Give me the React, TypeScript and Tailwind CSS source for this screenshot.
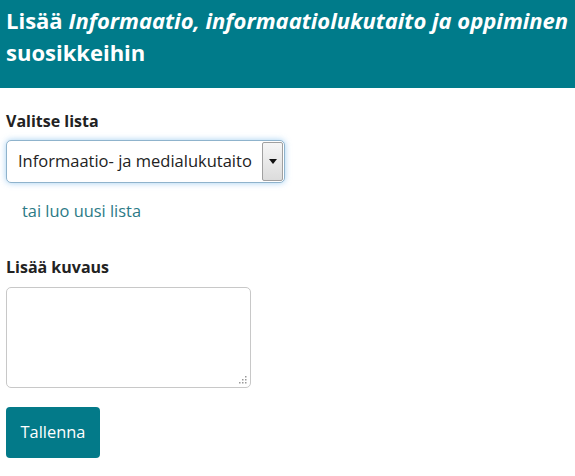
export default function App() {
  const font = { fontFamily: '"Open Sans", "Noto Sans", sans-serif' };
  return (
    <div className="min-h-screen bg-white text-[#222]" style={font}>
      <header className="h-[88px] overflow-hidden bg-[#007b8a] px-[6px] pt-[4px]">
        <h1 className="text-[22px] font-bold leading-[32px] text-white">
          <span className="whitespace-nowrap">
            Lisää <em>Informaatio, informaatiolukutaito ja oppiminen</em>
          </span>
          <br />
          suosikkeihin
        </h1>
      </header>

      <main className="px-[6px] pt-[22px]">
        <label className="block text-[16px] font-bold leading-[22px]">Valitse lista</label>
        <div className="mt-[8px] flex h-[43px] w-[279px] items-center justify-between rounded-[5px] border border-[#8fb3cc] bg-white pl-[11px] pr-[1px] shadow-[0_0_6px_rgba(102,175,233,0.6)]">
          <span className="text-[16.5px] leading-none text-[#222]">Informaatio- ja medialukutaito</span>
          <span className="flex h-[39px] w-[21px] items-center justify-center rounded-[2px] border border-[#a0a0a0] bg-gradient-to-b from-[#f6f6f6] to-[#dcdcdc]">
            <svg width="8" height="5" viewBox="0 0 8 5">
              <path d="M0 0h8L4 5z" fill="#111" />
            </svg>
          </span>
        </div>

        <a className="mt-[17px] ml-[16px] block text-[16.4px] leading-[22px] text-[#2c7a86]">tai luo uusi lista</a>

        <label className="mt-[34px] block text-[16px] font-bold leading-[22px]">Lisää kuvaus</label>
        <div className="relative mt-[9px] h-[101px] w-[245px] rounded-[5px] border border-[#c8c8c8] bg-white">
          <svg className="absolute bottom-[3px] right-[3px]" width="9" height="9" viewBox="0 0 9 9" fill="#999">
            <rect x="7" y="1" width="1.5" height="1.5" />
            <rect x="4" y="4" width="1.5" height="1.5" />
            <rect x="7" y="4" width="1.5" height="1.5" />
            <rect x="1" y="7" width="1.5" height="1.5" />
            <rect x="4" y="7" width="1.5" height="1.5" />
            <rect x="7" y="7" width="1.5" height="1.5" />
          </svg>
        </div>

        <button className="mt-[19px] h-[51px] w-[94px] rounded-[4px] bg-[#037a89] text-[16.4px] text-white">
          Tallenna
        </button>
      </main>
    </div>
  );
}
